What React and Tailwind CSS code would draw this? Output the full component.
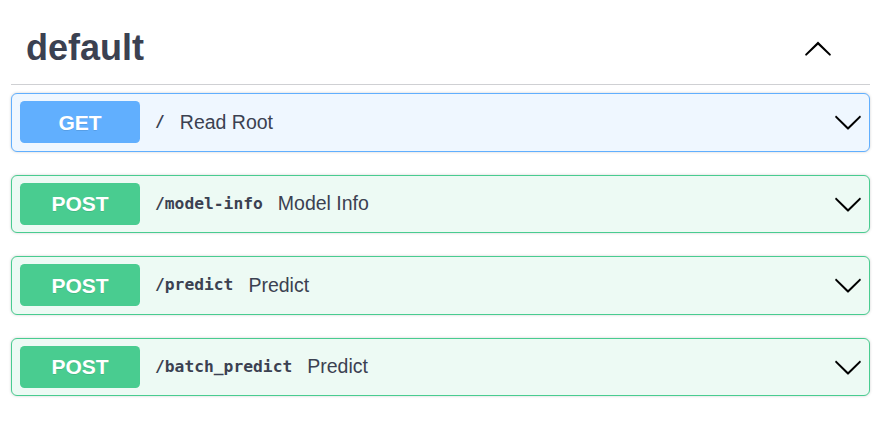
import React from "react";

const ops = [
  { method: "GET", path: "/", summary: "Read Root", kind: "get" },
  { method: "POST", path: "/model-info", summary: "Model Info", kind: "post" },
  { method: "POST", path: "/predict", summary: "Predict", kind: "post" },
  { method: "POST", path: "/batch_predict", summary: "Predict", kind: "post" },
];

function ArrowDown() {
  return (
    <svg width="30" height="30" viewBox="0 0 20 20" className="shrink-0">
      <path
        fill="#000"
        d="M17.418 6.109c.272-.268.709-.268.979 0s.271.701 0 .969l-7.908 7.83c-.27.268-.707.268-.979 0l-7.908-7.83c-.27-.268-.27-.701 0-.969.271-.268.709-.268.979 0L10 13.25l7.418-7.141z"
      />
    </svg>
  );
}

function ArrowUp() {
  return (
    <svg width="30" height="30" viewBox="0 0 20 20" className="shrink-0">
      <path
        fill="#000"
        d="M17.418 14.908C17.69 15.176 18.127 15.176 18.397 14.908C18.667 14.64 18.668 14.207 18.397 13.939L10.489 6.109C10.219 5.841 9.782 5.841 9.51 6.109L1.602 13.939C1.332 14.207 1.332 14.64 1.602 14.908C1.873 15.176 2.311 15.176 2.581 14.908L10 7.767L17.418 14.908Z"
      />
    </svg>
  );
}

function Op({ op }) {
  const isGet = op.kind === "get";
  return (
    <div
      className={
        "flex h-[58.5px] items-center rounded-[6px] border pl-[8px] pr-[6px] shadow-[0_0_3px_rgba(0,0,0,0.19)] " +
        (isGet ? "border-[#61affe] bg-[#eff7ff]" : "border-[#49cc90] bg-[#edfaf4]")
      }
    >
      <div
        className={
          "flex h-[42px] w-[120px] shrink-0 items-center justify-center rounded-[4.5px] text-[21px] font-bold text-white [text-shadow:0_1px_0_rgba(0,0,0,0.1)] " +
          (isGet ? "bg-[#61affe]" : "bg-[#49cc90]")
        }
        style={{ fontFamily: '"Liberation Sans", Arial, sans-serif' }}
      >
        {op.method}
      </div>
      <span
        className="ml-[15px] text-[16.3px] font-bold text-[#3b4151]"
        style={{ fontFamily: '"DejaVu Sans Mono", monospace' }}
      >
        {op.path}
      </span>
      <span
        className="ml-[15px] text-[19.5px] text-[#3b4151]"
        style={{ fontFamily: '"Liberation Sans", Arial, sans-serif' }}
      >
        {op.summary}
      </span>
      <div className="ml-auto flex items-center">
        <ArrowDown />
      </div>
    </div>
  );
}

export default function App() {
  return (
    <div
      className="min-h-[432px] w-[886px] bg-white pl-[11px] pt-[11px]"
      style={{ fontFamily: '"Liberation Sans", Arial, sans-serif' }}
    >
      <div className="w-[859px]">
        <div className="mb-[8px] flex items-center border-b border-[#cfd0d3] py-[15px] pl-[15px] pr-[37px]">
          <h3 className="text-[36px] font-bold leading-[1.2] text-[#3b4151]">default</h3>
          <div className="ml-auto flex items-center">
            <ArrowUp />
          </div>
        </div>
        <div className="flex flex-col gap-[23px]">
          {ops.map((op, i) => (
            <Op key={i} op={op} />
          ))}
        </div>
      </div>
    </div>
  );
}
